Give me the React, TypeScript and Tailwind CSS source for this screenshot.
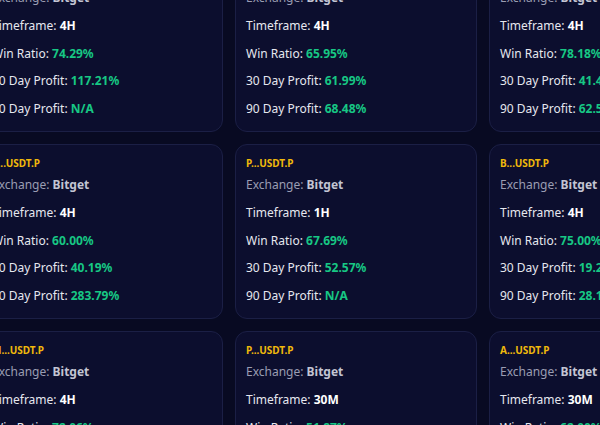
type Signal = {
  pair: string;
  exchange: string;
  timeframe: string;
  winRatio: string;
  profit30: string;
  profit90: string;
};

const signals: Signal[] = [
  { pair: "E...USDT.P", exchange: "Bitget", timeframe: "4H", winRatio: "74.29%", profit30: "117.21%", profit90: "N/A" },
  { pair: "L...USDT.P", exchange: "Bitget", timeframe: "4H", winRatio: "65.95%", profit30: "61.99%", profit90: "68.48%" },
  { pair: "S...USDT.P", exchange: "Bitget", timeframe: "4H", winRatio: "78.18%", profit30: "41.47%", profit90: "62.53%" },
  { pair: "S...USDT.P", exchange: "Bitget", timeframe: "4H", winRatio: "60.00%", profit30: "40.19%", profit90: "283.79%" },
  { pair: "P...USDT.P", exchange: "Bitget", timeframe: "1H", winRatio: "67.69%", profit30: "52.57%", profit90: "N/A" },
  { pair: "B...USDT.P", exchange: "Bitget", timeframe: "4H", winRatio: "75.00%", profit30: "19.24%", profit90: "28.16%" },
  { pair: "M...USDT.P", exchange: "Bitget", timeframe: "4H", winRatio: "72.06%", profit30: "33.12%", profit90: "N/A" },
  { pair: "P...USDT.P", exchange: "Bitget", timeframe: "30M", winRatio: "51.87%", profit30: "24.80%", profit90: "N/A" },
  { pair: "A...USDT.P", exchange: "Bitget", timeframe: "30M", winRatio: "62.00%", profit30: "18.55%", profit90: "N/A" },
];

function Row({ label, value }: { label: string; value: string }) {
  return (
    <p className="mt-[8px] text-[12px] leading-[19.5px] text-[#e6e7ee]">
      {label}: <span className="font-bold text-[#17c784]">{value}</span>
    </p>
  );
}

function SignalCard({ signal }: { signal: Signal }) {
  return (
    <div className="h-[175px] rounded-xl border border-[#1b1f45] bg-[#0c0e2e] px-[10px] pt-[10px]">
      <p className="text-[10px] font-bold leading-4 text-[#f0b90b]">{signal.pair}</p>
      <p className="mt-1 text-[12px] leading-5 text-[#9a9db2]">
        Exchange: <span className="font-bold text-[#c3c5d3]">{signal.exchange}</span>
      </p>
      <p className="mt-[8px] text-[12px] leading-[19.5px] text-[#e6e7ee]">
        Timeframe: <span className="font-bold text-white">{signal.timeframe}</span>
      </p>
      <Row label="Win Ratio" value={signal.winRatio} />
      <Row label="30 Day Profit" value={signal.profit30} />
      <Row label="90 Day Profit" value={signal.profit90} />
    </div>
  );
}

export default function App() {
  return (
    <div className="h-[425px] w-[600px] overflow-hidden bg-[#080a22] font-['Noto_Sans',sans-serif]">
      <div className="ml-[-19px] mt-[-43px] grid w-[750px] grid-cols-[242px_242px_242px] gap-3">
        {signals.map((signal, i) => (
          <SignalCard key={i} signal={signal} />
        ))}
      </div>
    </div>
  );
}
